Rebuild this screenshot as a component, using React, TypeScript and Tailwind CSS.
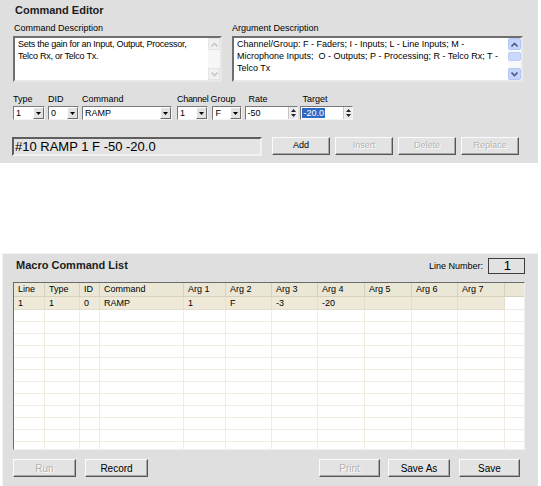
import React from "react";

// ================= SMALL WIN-STYLE CONTROLS =================
function DownTri() {
  return (
    <svg width="5" height="3" viewBox="0 0 5 3">
      <path d="M0 0h5L2.5 3z" fill="#000" />
    </svg>
  );
}

function Combo({ value, w }: { value: string; w: string }) {
  return (
    <div
      className={`${w} h-[14px] flex bg-white border border-t-[#7a7a7a] border-l-[#7a7a7a] border-r-[#f4f4f4] border-b-[#f4f4f4]`}
    >
      <div className="flex-1 pl-[2px] text-[9px] leading-[12px] text-black">{value}</div>
      <div className="w-[11px] flex items-center justify-center bg-[#e2e2e2] border border-t-white border-l-white border-r-[#6a6a6a] border-b-[#6a6a6a]">
        <DownTri />
      </div>
    </div>
  );
}

function Spin({ value, w, selected }: { value: string; w: string; selected?: boolean }) {
  return (
    <div
      className={`${w} h-[14px] flex bg-white border border-t-[#7a7a7a] border-l-[#7a7a7a] border-r-[#f4f4f4] border-b-[#f4f4f4]`}
    >
      <div className="flex-1 pl-[1px] text-[9px] leading-[12px] text-black">
        {selected ? <span className="bg-[#316ac5] text-white px-[1px]">{value}</span> : value}
      </div>
      <div className="w-[9px] flex flex-col items-center justify-center gap-[2px] bg-[#ececec] border-l border-[#c8c8c8]">
        <svg width="5" height="3" viewBox="0 0 5 3">
          <path d="M0 3h5L2.5 0z" fill="#222" />
        </svg>
        <svg width="5" height="3" viewBox="0 0 5 3">
          <path d="M0 0h5L2.5 3z" fill="#222" />
        </svg>
      </div>
    </div>
  );
}

function Btn({ label, w, disabled, big }: { label: string; w: string; disabled?: boolean; big?: boolean }) {
  return (
    <div
      className={`${w} h-[18px] flex items-center justify-center bg-[#e3e3e3] border border-t-[#fbfbfb] border-l-[#fbfbfb] border-r-[#555] border-b-[#555] shadow-[inset_-1px_-1px_0_#a8a8a8] ${
        big ? "text-[10px]" : "text-[9px]"
      } ${disabled ? "text-[#b4b4b4] [text-shadow:1px_1px_0_#fff]" : "text-black"}`}
    >
      {label}
    </div>
  );
}

function Chevron({ up, color }: { up?: boolean; color: string }) {
  return (
    <svg width="7" height="5" viewBox="0 0 7 5">
      <path d={up ? "M0.5 4.5L3.5 1.5L6.5 4.5" : "M0.5 0.5L3.5 3.5L6.5 0.5"} fill="none" stroke={color} strokeWidth="1.6" />
    </svg>
  );
}

const gridCols =
  "grid grid-cols-[31px_35px_20px_84px_42px_46px_46px_47px_47px_46px_47px_1fr]";

export default function App() {
  const headers = ["Line", "Type", "ID", "Command", "Arg 1", "Arg 2", "Arg 3", "Arg 4", "Arg 5", "Arg 6", "Arg 7"];
  const row = ["1", "1", "0", "RAMP", "1", "F", "-3", "-20", "", "", ""];
  const empty = Array.from({ length: 12 });

  return (
    <div className="w-[541px] h-[486px] bg-white overflow-hidden font-['Liberation_Sans',Arial,sans-serif] text-black">
      {/* ================= COMMAND EDITOR ================= */}
      <div className="w-[538px] h-[163px] bg-[#dfdfdf] pl-[13px] pt-[3px]">
        <div className="text-[11px] font-bold leading-[14px] text-[#1c1c1c] pl-[2px]">Command Editor</div>

        <div className="flex gap-[10px] mt-[6px]">
          <div className="w-[209px]">
            <div className="text-[9px] leading-[11px] pl-[1px]">Command Description</div>
            <div className="mt-[2px] h-[46px] flex bg-white border-2 border-t-[#6f6f6f] border-l-[#6f6f6f] border-r-[#e8e8e8] border-b-[#e8e8e8]">
              <div className="flex-1 pl-[3px] text-[9px] leading-[12px] tracking-[-0.25px] whitespace-nowrap overflow-hidden">
                Sets the gain for an Input, Output, Processor,
                <br />
                Telco Rx, or Telco Tx.
              </div>
              <div className="w-[12px] flex flex-col justify-between bg-[#f7f7f7]">
                <div className="h-[12px] flex items-center justify-center border border-[#e4e4e4] bg-[#f1f1f1]">
                  <Chevron up color="#c9c9c9" />
                </div>
                <div className="h-[12px] flex items-center justify-center border border-[#e4e4e4] bg-[#f1f1f1]">
                  <Chevron color="#c9c9c9" />
                </div>
              </div>
            </div>
          </div>

          <div className="w-[291px]">
            <div className="text-[9px] leading-[11px]">Argument Description</div>
            <div className="mt-[2px] h-[46px] flex bg-white border-2 border-t-[#6f6f6f] border-l-[#6f6f6f] border-r-[#e8e8e8] border-b-[#e8e8e8]">
              <div className="flex-1 pl-[3px] text-[9px] leading-[12px] whitespace-nowrap overflow-hidden">
                Channel/Group: F - Faders; I - Inputs; L - Line Inputs; M -
                <br />
                Microphone Inputs;&nbsp; O - Outputs; P - Processing; R - Telco Rx; T -
                <br />
                Telco Tx
              </div>
              <div className="w-[13px] flex flex-col bg-[#f8f8fc]">
                <div className="h-[12px] flex items-center justify-center rounded-[2px] bg-[#c4d4fb] border border-[#b3c6f2]">
                  <Chevron up color="#4a5f8c" />
                </div>
                <div className="h-[9px] mt-[2px] rounded-[2px] bg-[#cad9fa] border border-[#bccdf3]" />
                <div className="flex-1" />
                <div className="h-[12px] flex items-center justify-center rounded-[2px] bg-[#c4d4fb] border border-[#b3c6f2]">
                  <Chevron color="#4a5f8c" />
                </div>
              </div>
            </div>
          </div>
        </div>

        {/* field row */}
        <div className="flex mt-[12px] text-[9px] leading-[11px]">
          <div className="flex flex-col gap-[1px]">
            <div>Type</div>
            <Combo value="1" w="w-[32px]" />
          </div>
          <div className="flex flex-col gap-[1px] ml-[3px]">
            <div>DID</div>
            <Combo value="0" w="w-[31px]" />
          </div>
          <div className="flex flex-col gap-[1px] ml-[3px]">
            <div>Command</div>
            <Combo value="RAMP" w="w-[90px]" />
          </div>
          <div className="flex flex-col gap-[1px] ml-[5px]">
            <div className="whitespace-nowrap tracking-[-0.3px]">Channel</div>
            <Combo value="1" w="w-[31px]" />
          </div>
          <div className="flex flex-col gap-[1px] ml-[4px]">
            <div className="-ml-[2px]">Group</div>
            <Combo value="F" w="w-[30px]" />
          </div>
          <div className="flex flex-col gap-[1px] ml-[3px]">
            <div className="pl-[3px]">Rate</div>
            <Spin value="-50" w="w-[53px]" />
          </div>
          <div className="flex flex-col gap-[1px] ml-[2px]">
            <div className="pl-[2px]">Target</div>
            <Spin value="-20.0" w="w-[53px]" selected />
          </div>
        </div>

        {/* status + actions */}
        <div className="flex mt-[17px] items-start">
          <div className="w-[250px] h-[19px] -ml-[1px] bg-[#e4e4e4] border-2 border-t-[#5f5f5f] border-l-[#5f5f5f] border-r-[#f2f2f2] border-b-[#f2f2f2] text-[13px] leading-[15px] pl-[1px]">
            #10 RAMP 1 F -50 -20.0
          </div>
          <div className="flex gap-[5px] ml-[10px]">
            <Btn label="Add" w="w-[58px]" />
            <Btn label="Insert" w="w-[58px]" disabled />
            <Btn label="Delete" w="w-[58px]" disabled />
            <Btn label="Replace" w="w-[58px]" disabled />
          </div>
        </div>
      </div>

      <div className="h-[90px]" />

      {/* ================= MACRO COMMAND LIST ================= */}
      <div className="ml-[2px] w-[536px] h-[233px] bg-[#dfdfdf] border-t border-l border-[#f3f3f3] pt-[4px] pl-[10px]">
        <div className="flex items-start justify-between w-[512px]">
          <div className="text-[11px] font-bold leading-[14px] text-[#1c1c1c] pl-[3px]">Macro Command List</div>
          <div className="flex items-center gap-[5px]">
            <div className="text-[9px] leading-[16px]">Line Number:</div>
            <div className="w-[37px] h-[16px] border border-[#3c3c3c] bg-[#e2e2e2] text-[13px] leading-[14px] text-right pr-[13px]">
              1
            </div>
          </div>
        </div>

        <div className="mt-[8px] w-[512px] h-[168px] overflow-hidden bg-white border border-t-[#6a6a6a] border-l-[#6a6a6a] border-r-[#f0f0f0] border-b-[#f0f0f0] text-[9px]">
          <div className={`${gridCols} h-[14px] bg-[#ebe7d7]`}>
            {headers.map((h) => (
              <div key={h} className="border-r border-b border-[#d6d1bf] pl-[4px] leading-[13px]">
                {h}
              </div>
            ))}
            <div className="border-b border-[#d6d1bf]" />
          </div>
          <div className={`${gridCols} h-[13px]`}>
            {row.map((c, i) => (
              <div key={i} className="bg-[#efe9da] border-r border-b border-[#e4dece] pl-[4px] leading-[12px]">
                {c}
              </div>
            ))}
            <div className="bg-white border-b border-[#efebe0]" />
          </div>
          {empty.map((_, r) => (
            <div key={r} className={`${gridCols} h-[12px]`}>
              {headers.map((h) => (
                <div key={h} className="border-r border-b border-[#f0ece2]" />
              ))}
              <div className="border-b border-[#f0ece2]" />
            </div>
          ))}
        </div>

        <div className="flex items-start mt-[9px] w-[512px]">
          <Btn label="Run" w="w-[63px]" disabled big />
          <div className="ml-[9px]">
            <Btn label="Record" w="w-[63px]" big />
          </div>
          <div className="flex-1" />
          <Btn label="Print" w="w-[61px]" disabled big />
          <div className="ml-[8px]">
            <Btn label="Save As" w="w-[62px]" big />
          </div>
          <div className="ml-[9px] mr-[5px]">
            <Btn label="Save" w="w-[61px]" big />
          </div>
        </div>
      </div>
    </div>
  );
}
